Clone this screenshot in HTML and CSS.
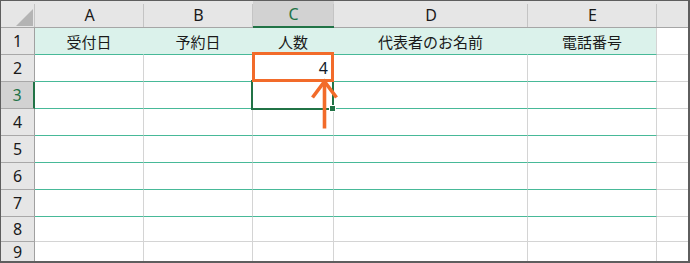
FILE: index.html
```html
<!DOCTYPE html>
<html lang="ja">
<head>
<meta charset="utf-8">
<title>Sheet</title>
<link rel="stylesheet" href="styles.css">
</head>
<body>
<div class="sheet">
  <div class="grid">
    <div class="hd corner"><svg class="tri" width="18" height="18" viewBox="0 0 18 18"><polygon points="17,0 17,17 0,17" fill="#b4b4b4"/></svg></div>
    <div class="hd col">A</div>
    <div class="hd col">B</div>
    <div class="hd col sel">C</div>
    <div class="hd col">D</div>
    <div class="hd col">E</div>
    <div class="hd col last"></div>

    <div class="rh">1</div>
    <div class="th">受付日</div>
    <div class="th">予約日</div>
    <div class="th">人数</div>
    <div class="th">代表者のお名前</div>
    <div class="th end">電話番号</div>
    <div class="c x"></div>

    <div class="rh">2</div>
    <div class="c t"></div><div class="c t"></div><div class="c t num">4</div><div class="c t"></div><div class="c t"></div><div class="c x"></div>

    <div class="rh rsel">3</div>
    <div class="c t"></div><div class="c t"></div><div class="c t"></div><div class="c t"></div><div class="c t"></div><div class="c x"></div>

    <div class="rh">4</div>
    <div class="c t"></div><div class="c t"></div><div class="c t"></div><div class="c t"></div><div class="c t"></div><div class="c x"></div>

    <div class="rh">5</div>
    <div class="c t"></div><div class="c t"></div><div class="c t"></div><div class="c t"></div><div class="c t"></div><div class="c x"></div>

    <div class="rh">6</div>
    <div class="c t"></div><div class="c t"></div><div class="c t"></div><div class="c t"></div><div class="c t"></div><div class="c x"></div>

    <div class="rh">7</div>
    <div class="c t"></div><div class="c t"></div><div class="c t"></div><div class="c t"></div><div class="c t"></div><div class="c x"></div>

    <div class="rh">8</div>
    <div class="c"></div><div class="c"></div><div class="c"></div><div class="c"></div><div class="c"></div><div class="c x"></div>

    <div class="rh lastrow">9</div>
    <div class="c lastrow"></div><div class="c lastrow"></div><div class="c lastrow"></div><div class="c lastrow"></div><div class="c lastrow"></div><div class="c x lastrow"></div>
  </div>

  <div class="selection"><span class="handle"></span></div>
  <div class="highlight"></div>
  <svg class="arrow" width="687" height="260" viewBox="0 0 687 260">
    <line x1="323.5" y1="80" x2="323.5" y2="127.5" stroke="#f26b2a" stroke-width="3.6"/>
    <polyline points="311.5,96.5 323.5,80.5 335.5,96.5" fill="none" stroke="#f26b2a" stroke-width="3.6" stroke-linejoin="miter"/>
  </svg>
</div>
</body>
</html>
```

FILE: styles.css
```css
html, body {
  margin: 0;
  padding: 0;
  background: #ffffff;
}

.sheet {
  position: relative;
  width: 690px;
  height: 263px;
  box-sizing: border-box;
  border-style: solid;
  border-color: #5e5e5e;
  border-width: 1px 2px 2px 1px;
  overflow: hidden;
  font-family: "Noto Sans CJK JP", "Noto Sans", sans-serif;
  font-size: 15px;
  color: #111111;
}

.grid {
  display: grid;
  grid-template-columns: 34px 109px 109px 81px 194px 129px 31px;
  grid-template-rows: repeat(8, 27px) 25px 19px;
}

.grid > div {
  box-sizing: border-box;
  display: flex;
  align-items: center;
  justify-content: center;
  line-height: 1;
}

/* column headers */
.hd {
  border-bottom: 1px solid #a6a6a6;
  background: linear-gradient(#c4c4c4, #c4c4c4) right 0 top 3px / 1px calc(100% - 3px) no-repeat, #e6e6e6;
  color: #1a1a1a;
  font-family: "Noto Sans", "Noto Sans CJK JP", sans-serif;
  font-size: 16px;
  padding-top: 1px;
}

.hd.last {
  background: #e6e6e6;
}

.hd.sel {
  background: linear-gradient(#c4c4c4, #c4c4c4) right 0 top 3px / 1px calc(100% - 3px) no-repeat, #d2d2d2;
  border-bottom: 2px solid #217346;
  color: #217346;
}

.corner {
  position: relative;
  justify-content: flex-start;
  align-items: flex-start;
}

.corner .tri {
  display: block;
  margin: 6px 0 0 14px;
}

/* row headers */
.rh {
  background: #e6e6e6;
  border-right: 1px solid #a0a0a0;
  border-bottom: 1px solid #a8a8a8;
  font-family: "Noto Sans", "Noto Sans CJK JP", sans-serif;
  font-size: 16px;
  color: #1a1a1a;
}

.rh.rsel {
  background: #d2d2d2;
  color: #217346;
  border-right: 2px solid #217346;
}

.rh.lastrow {
  border-bottom: none;
}

/* table header row */
.th {
  background: #dbf2eb;
  border-bottom: 1px solid #48b998;
  border-right: 1px solid #dbf2eb;
  color: #1a1a1a;
}

.th.end {
  border-right-color: #d4d4d4;
}

/* body cells */
.c {
  border-right: 1px solid #d4d4d4;
  border-bottom: 1px solid #d4d4d4;
}

.c.t {
  border-bottom-color: #48b998;
}

.c.x {
  border-right: none;
}

.c.lastrow {
  border-bottom: none;
}

.grid > .num {
  justify-content: flex-end;
  padding-right: 5px;
  font-family: "Noto Sans", sans-serif;
  font-size: 16px;
  color: #101828;
}

/* overlays */
.selection {
  position: absolute;
  left: 250px;
  top: 79px;
  width: 83px;
  height: 30px;
  box-sizing: border-box;
  border: 2px solid #217346;
}

.handle {
  position: absolute;
  right: -3px;
  bottom: -3px;
  width: 5px;
  height: 5px;
  background: #217346;
  outline: 1px solid #ffffff;
}

.highlight {
  position: absolute;
  left: 251px;
  top: 51px;
  width: 82px;
  height: 30px;
  box-sizing: border-box;
  border: 3px solid #f26b2a;
}

.arrow {
  position: absolute;
  left: 0;
  top: 0;
  pointer-events: none;
}
```
